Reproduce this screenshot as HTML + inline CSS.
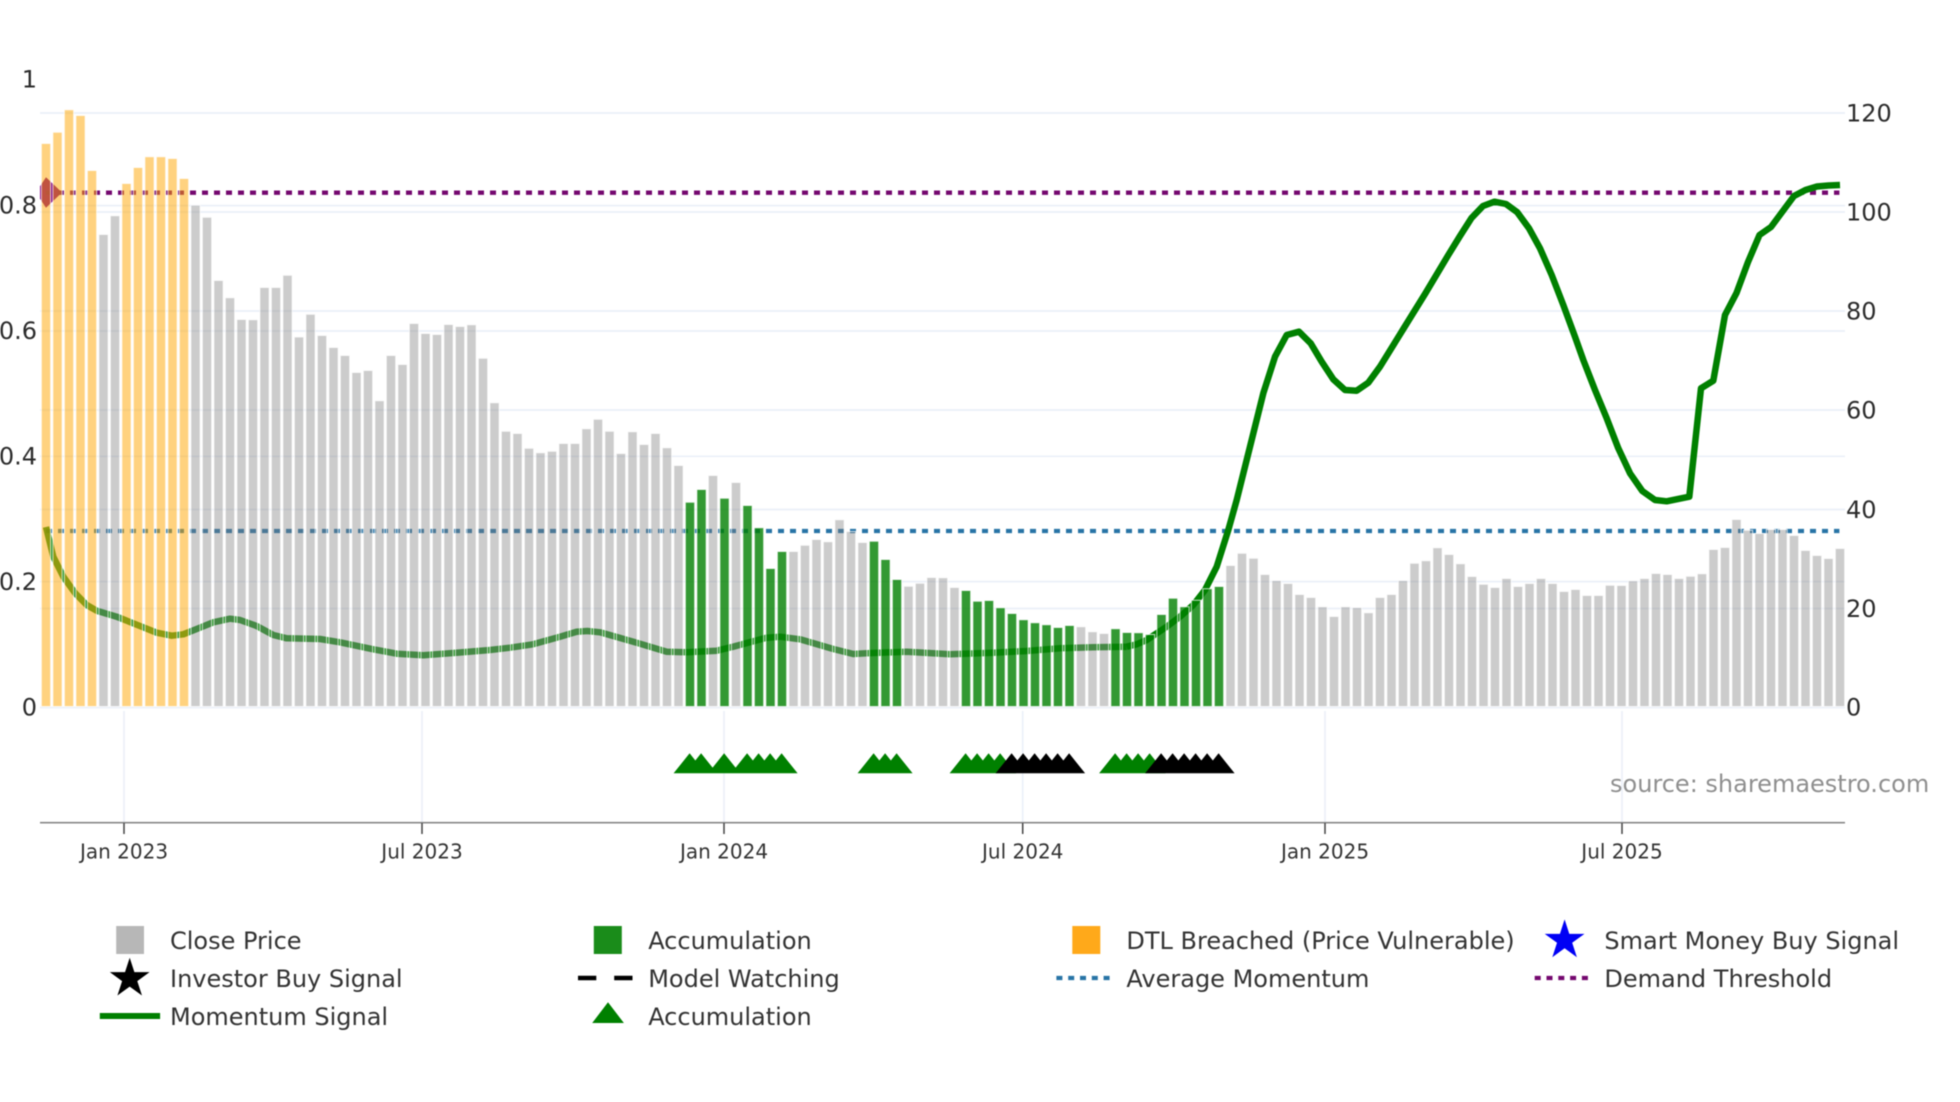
<!DOCTYPE html>
<html>
<head>
<meta charset="utf-8">
<title>Momentum chart</title>
<style>
html,body{margin:0;padding:0;background:#fff;width:1960px;height:1102px;overflow:hidden}
svg{display:block;filter:blur(.4px)}
text{font-family:"DejaVu Sans","Liberation Sans",sans-serif}
.t{font-size:24px;fill:#2c2c2c}
.x{font-size:20px;fill:#333;text-anchor:middle}
.l{font-size:24px;fill:#333}
</style>
</head>
<body>
<svg width="1960" height="1102" viewBox="0 0 1960 1102" xmlns="http://www.w3.org/2000/svg">
<rect width="1960" height="1102" fill="#fff"/>

<!-- grid -->
<path d="M40 113H1845M40 212H1845M40 311H1845M40 410H1845M40 509.5H1845M40 608.5H1845M40 205.6H1845M40 331H1845M40 456.3H1845M40 581.6H1845M40 707.5H1845" stroke="#ebf0f8" stroke-width="1.7" fill="none"/>
<path d="M124 711V822M422 711V822M724 711V822M1022.7 711V822M1325 711V822M1622 711V822" stroke="#ebf0f8" stroke-width="1.7" fill="none"/>

<!-- diamond marker -->
<path d="M40 186.3L46 177.2L62 192.5L46 207.8L40 198.7Z" fill="#800080"/>

<!-- threshold lines -->
<path d="M46 192.7H1839.4" stroke="#74086f" stroke-width="4.3" stroke-dasharray="6 6" fill="none"/>
<path d="M46 531H1839.4" stroke="#2874a6" stroke-width="4.3" stroke-dasharray="6 6" fill="none"/>

<!-- momentum line -->
<polyline fill="none" stroke="#008000" stroke-opacity=".88" stroke-width="6.5" stroke-linejoin="round" points="46,527 53.3,556.7 63.3,576.7 75,593 86.7,605 96.7,610.7 116.7,616.7 140,626 156.7,632.7 171.7,635.7 183.3,634.3 196.7,629 213.3,622.3 230,618.7 240,620 256.7,626 273.3,635 286.7,638.3 320,639 340,642.3 373.3,649.3 396.7,653.7 423.3,655.3 456.7,652.7 490,650 510,647.7 533,644.3 560,636.7 576.7,631.7 587.3,631 600,632.3 633.3,641.7 666.7,651.7 686.7,652.3 716.7,650.7 733.3,646.7 766.7,637.7 780,636.7 800,639.3 833.3,649 853.3,654 866.7,653.3 906.7,651.7 950,654.3 993.3,652.7 1026.7,651 1060,648.3 1093,647.3 1126.7,646.7"/>
<polyline fill="none" stroke="#008000" stroke-width="6.5" stroke-linejoin="round" points="1126.7,646.7 1136.7,644.3 1146.7,640 1156.7,633.3 1166.7,626.7 1180,616.7 1193.3,605 1205,590 1216.7,566.7 1228.3,530 1236.7,500 1250,446.7 1263.3,393.3 1275,356.7 1286.7,335 1299,331.7 1310.7,343.3 1321.7,361.7 1333.3,379.3 1345,390 1356.7,390.7 1368.3,382.7 1380,366.7 1403.3,329 1425,294 1448.3,255 1460,236 1471.5,218 1483,206 1494.5,201.7 1506,204 1517.3,212.3 1529,228.3 1540,248.3 1551.7,275 1563.3,305 1575,336.7 1583.3,360 1595,390 1606.7,418.3 1618.3,448.3 1630,473.3 1642.3,491 1655,500 1666.7,501.3 1689.3,496.7 1701,388.3 1713.3,380.7 1725,315 1736.5,293 1748,262 1759.5,235 1771,227 1782.5,211.5 1794,196 1805.5,190 1817,186.5 1828.5,185.5 1840,185"/>

<!-- bars -->
<g transform="translate(0,-0.5)" stroke="#fff" stroke-opacity=".75" stroke-width="1">
<path fill="#808080" fill-opacity=".4" d="M98.85 235h9.3V707h-9.3zM110.35 216.3h9.3V707h-9.3zM190.85 205.7h9.3V707h-9.3zM202.35 217.7h9.3V707h-9.3zM213.85 281h9.3V707h-9.3zM225.35 298.3h9.3V707h-9.3zM236.85 320h9.3V707h-9.3zM248.35 320.3h9.3V707h-9.3zM259.85 288h9.3V707h-9.3zM271.35 288h9.3V707h-9.3zM282.85 275.7h9.3V707h-9.3zM294.35 337.5h9.3V707h-9.3zM305.85 314.7h9.3V707h-9.3zM317.35 336h9.3V707h-9.3zM328.85 348h9.3V707h-9.3zM340.35 356h9.3V707h-9.3zM351.85 373h9.3V707h-9.3zM363.35 371h9.3V707h-9.3zM374.85 401.3h9.3V707h-9.3zM386.35 356h9.3V707h-9.3zM397.85 365h9.3V707h-9.3zM409.35 324h9.3V707h-9.3zM420.85 334h9.3V707h-9.3zM432.35 335h9.3V707h-9.3zM443.85 325h9.3V707h-9.3zM455.35 327h9.3V707h-9.3zM466.85 325.3h9.3V707h-9.3zM478.35 358.7h9.3V707h-9.3zM489.85 403.3h9.3V707h-9.3zM501.35 431.7h9.3V707h-9.3zM512.85 434h9.3V707h-9.3zM524.35 448.7h9.3V707h-9.3zM535.85 453.3h9.3V707h-9.3zM547.35 451.7h9.3V707h-9.3zM558.85 444h9.3V707h-9.3zM570.35 444h9.3V707h-9.3zM581.85 429.3h9.3V707h-9.3zM593.35 419.7h9.3V707h-9.3zM604.85 431.7h9.3V707h-9.3zM616.35 454h9.3V707h-9.3zM627.85 432.3h9.3V707h-9.3zM639.35 445h9.3V707h-9.3zM650.85 434h9.3V707h-9.3zM662.35 448.3h9.3V707h-9.3zM673.85 466h9.3V707h-9.3zM708.35 476h9.3V707h-9.3zM731.35 483h9.3V707h-9.3zM788.85 552h9.3V707h-9.3zM800.35 545.7h9.3V707h-9.3zM811.85 540h9.3V707h-9.3zM823.35 542.3h9.3V707h-9.3zM834.85 520.3h9.3V707h-9.3zM846.35 532h9.3V707h-9.3zM857.85 543h9.3V707h-9.3zM903.85 586.7h9.3V707h-9.3zM915.35 583.7h9.3V707h-9.3zM926.85 578h9.3V707h-9.3zM938.35 578.3h9.3V707h-9.3zM949.85 588h9.3V707h-9.3zM1076.35 627.3h9.3V707h-9.3zM1087.85 632.3h9.3V707h-9.3zM1099.35 634h9.3V707h-9.3zM1225.85 566h9.3V707h-9.3zM1237.35 553.7h9.3V707h-9.3zM1248.85 558.7h9.3V707h-9.3zM1260.35 575h9.3V707h-9.3zM1271.85 581h9.3V707h-9.3zM1283.35 584h9.3V707h-9.3zM1294.85 595h9.3V707h-9.3zM1306.35 598h9.3V707h-9.3zM1317.85 607.3h9.3V707h-9.3zM1329.35 617h9.3V707h-9.3zM1340.85 607.3h9.3V707h-9.3zM1352.35 608h9.3V707h-9.3zM1363.85 613.3h9.3V707h-9.3zM1375.35 598h9.3V707h-9.3zM1386.85 595h9.3V707h-9.3zM1398.35 581h9.3V707h-9.3zM1409.85 563.7h9.3V707h-9.3zM1421.35 561.3h9.3V707h-9.3zM1432.85 548.3h9.3V707h-9.3zM1444.35 555h9.3V707h-9.3zM1455.85 564.3h9.3V707h-9.3zM1467.35 577h9.3V707h-9.3zM1478.85 584.7h9.3V707h-9.3zM1490.35 588h9.3V707h-9.3zM1501.85 579h9.3V707h-9.3zM1513.35 587h9.3V707h-9.3zM1524.85 584h9.3V707h-9.3zM1536.35 579h9.3V707h-9.3zM1547.85 584h9.3V707h-9.3zM1559.35 592h9.3V707h-9.3zM1570.85 590h9.3V707h-9.3zM1582.35 596h9.3V707h-9.3zM1593.85 596h9.3V707h-9.3zM1605.35 585.7h9.3V707h-9.3zM1616.85 586h9.3V707h-9.3zM1628.35 581.3h9.3V707h-9.3zM1639.85 579h9.3V707h-9.3zM1651.35 574h9.3V707h-9.3zM1662.85 575h9.3V707h-9.3zM1674.35 579h9.3V707h-9.3zM1685.85 576.7h9.3V707h-9.3zM1697.35 574.3h9.3V707h-9.3zM1708.85 550h9.3V707h-9.3zM1720.35 548h9.3V707h-9.3zM1731.85 520h9.3V707h-9.3zM1743.35 530.7h9.3V707h-9.3zM1754.85 534h9.3V707h-9.3zM1766.35 530h9.3V707h-9.3zM1777.85 530h9.3V707h-9.3zM1789.35 536h9.3V707h-9.3zM1800.85 551h9.3V707h-9.3zM1812.35 556h9.3V707h-9.3zM1823.85 559h9.3V707h-9.3zM1835.35 549h9.3V707h-9.3z"/>
<path fill="#ffa500" fill-opacity=".5" d="M41.35 144h9.3V707h-9.3zM52.85 132.7h9.3V707h-9.3zM64.35 110.3h9.3V707h-9.3zM75.85 116h9.3V707h-9.3zM87.35 171h9.3V707h-9.3zM121.85 184h9.3V707h-9.3zM133.35 168h9.3V707h-9.3zM144.85 157.3h9.3V707h-9.3zM156.35 157.3h9.3V707h-9.3zM167.85 159h9.3V707h-9.3zM179.35 179h9.3V707h-9.3z"/>
<path fill="#008000" fill-opacity=".8" d="M685.35 502.7h9.3V707h-9.3zM696.85 490h9.3V707h-9.3zM719.85 498.7h9.3V707h-9.3zM742.85 506h9.3V707h-9.3zM754.35 528.3h9.3V707h-9.3zM765.85 569h9.3V707h-9.3zM777.35 552h9.3V707h-9.3zM869.35 541.7h9.3V707h-9.3zM880.85 560h9.3V707h-9.3zM892.35 580h9.3V707h-9.3zM961.35 591h9.3V707h-9.3zM972.85 601.7h9.3V707h-9.3zM984.35 601h9.3V707h-9.3zM995.85 608.3h9.3V707h-9.3zM1007.35 614h9.3V707h-9.3zM1018.85 620.3h9.3V707h-9.3zM1030.35 623.3h9.3V707h-9.3zM1041.85 625.3h9.3V707h-9.3zM1053.35 628h9.3V707h-9.3zM1064.85 626h9.3V707h-9.3zM1110.85 629.3h9.3V707h-9.3zM1122.35 633h9.3V707h-9.3zM1133.85 633.3h9.3V707h-9.3zM1145.35 635h9.3V707h-9.3zM1156.85 615h9.3V707h-9.3zM1168.35 598.7h9.3V707h-9.3zM1179.85 607.3h9.3V707h-9.3zM1191.35 600.7h9.3V707h-9.3zM1202.85 589.3h9.3V707h-9.3zM1214.35 587h9.3V707h-9.3z"/>
</g>

<!-- triangle markers -->
<g transform="translate(-0.4,0)">
<path fill="#008000" d="M674 773.3l16-20 16 20zM685.5 773.3l16-20 16 20zM708.5 773.3l16-20 16 20zM731.5 773.3l16-20 16 20zM743 773.3l16-20 16 20zM754.5 773.3l16-20 16 20zM766 773.3l16-20 16 20zM858 773.3l16-20 16 20zM869.5 773.3l16-20 16 20zM881 773.3l16-20 16 20zM950 773.3l16-20 16 20zM961.5 773.3l16-20 16 20zM973 773.3l16-20 16 20zM984.5 773.3l16-20 16 20zM1099.5 773.3l16-20 16 20zM1111 773.3l16-20 16 20zM1122.5 773.3l16-20 16 20zM1134 773.3l16-20 16 20z"/>
<path fill="#000" d="M996 773.3l16-20 16 20zM1007.5 773.3l16-20 16 20zM1019 773.3l16-20 16 20zM1030.5 773.3l16-20 16 20zM1042 773.3l16-20 16 20zM1053.5 773.3l16-20 16 20zM1145.5 773.3l16-20 16 20zM1157 773.3l16-20 16 20zM1168.5 773.3l16-20 16 20zM1180 773.3l16-20 16 20zM1191.5 773.3l16-20 16 20zM1203 773.3l16-20 16 20z"/>
</g>

<!-- x axis -->
<path d="M40 822.7H1845" stroke="#888" stroke-width="1.6" fill="none"/>
<path d="M124 823V834M422 823V834M724 823V834M1022.7 823V834M1325 823V834M1622 823V834" stroke="#444" stroke-width="1.5" fill="none"/>

<!-- left ticks -->
<text class="t" x="37" y="87.6" text-anchor="end">1</text>
<text class="t" x="37" y="213.6" text-anchor="end">0.8</text>
<text class="t" x="37" y="339" text-anchor="end">0.6</text>
<text class="t" x="37" y="464.3" text-anchor="end">0.4</text>
<text class="t" x="37" y="589.8" text-anchor="end">0.2</text>
<text class="t" x="37" y="715.6" text-anchor="end">0</text>

<!-- right ticks -->
<text class="t" x="1846" y="121.6">120</text>
<text class="t" x="1846" y="220.6">100</text>
<text class="t" x="1846" y="319.6">80</text>
<text class="t" x="1846" y="418.6">60</text>
<text class="t" x="1846" y="518">40</text>
<text class="t" x="1846" y="617">20</text>
<text class="t" x="1846" y="715.6">0</text>

<!-- x labels -->
<text class="x" x="124" y="858.3">Jan 2023</text>
<text class="x" x="422" y="858.3">Jul 2023</text>
<text class="x" x="724" y="858.3">Jan 2024</text>
<text class="x" x="1022.7" y="858.3">Jul 2024</text>
<text class="x" x="1325" y="858.3">Jan 2025</text>
<text class="x" x="1622" y="858.3">Jul 2025</text>

<text x="1610" y="792.2" style="font-size:24px;fill:#8f8f8f">source: sharemaestro.com</text>

<!-- legend symbols -->
<rect x="116.2" y="926" width="27.8" height="28" fill="#b7b7b7"/>
<rect x="593.8" y="926" width="28" height="28" fill="#1a8c1a"/>
<rect x="1072.3" y="926" width="28" height="28" fill="#ffa91a"/>
<path transform="translate(1564.6,940.3)" fill="#0000f5" d="M0-20.9L4.69-6.46H19.88L7.59 2.47 12.29 16.91 0 7.98-12.29 16.91-7.59 2.47-19.88-6.46H-4.69Z"/>
<path transform="translate(129.7,978.6)" fill="#000" d="M0-20.9L4.69-6.46H19.88L7.59 2.47 12.29 16.91 0 7.98-12.29 16.91-7.59 2.47-19.88-6.46H-4.69Z"/>
<path d="M99.8 1016H160.1" stroke="#008000" stroke-width="6" fill="none"/>
<path d="M578 978H596.3M614.2 978H632.5" stroke="#000" stroke-width="4.5" fill="none"/>
<path d="M592.2 1023L608 1002.3 623.9 1023Z" fill="#008000"/>
<path d="M1056.4 978H1112" stroke="#2874a6" stroke-width="4.3" stroke-dasharray="6 5.8" fill="none"/>
<path d="M1534.7 978H1590" stroke="#74086f" stroke-width="4.3" stroke-dasharray="6 5.8" fill="none"/>

<!-- legend labels -->
<text class="l" x="170" y="949">Close Price</text>
<text class="l" x="170" y="987">Investor Buy Signal</text>
<text class="l" x="170" y="1025">Momentum Signal</text>
<text class="l" x="648.2" y="949">Accumulation</text>
<text class="l" x="648.2" y="987">Model Watching</text>
<text class="l" x="648.2" y="1025">Accumulation</text>
<text class="l" x="1126.4" y="949">DTL Breached (Price Vulnerable)</text>
<text class="l" x="1126.4" y="987">Average Momentum</text>
<text class="l" x="1604.4" y="949">Smart Money Buy Signal</text>
<text class="l" x="1604.4" y="987">Demand Threshold</text>
</svg>
</body>
</html>
